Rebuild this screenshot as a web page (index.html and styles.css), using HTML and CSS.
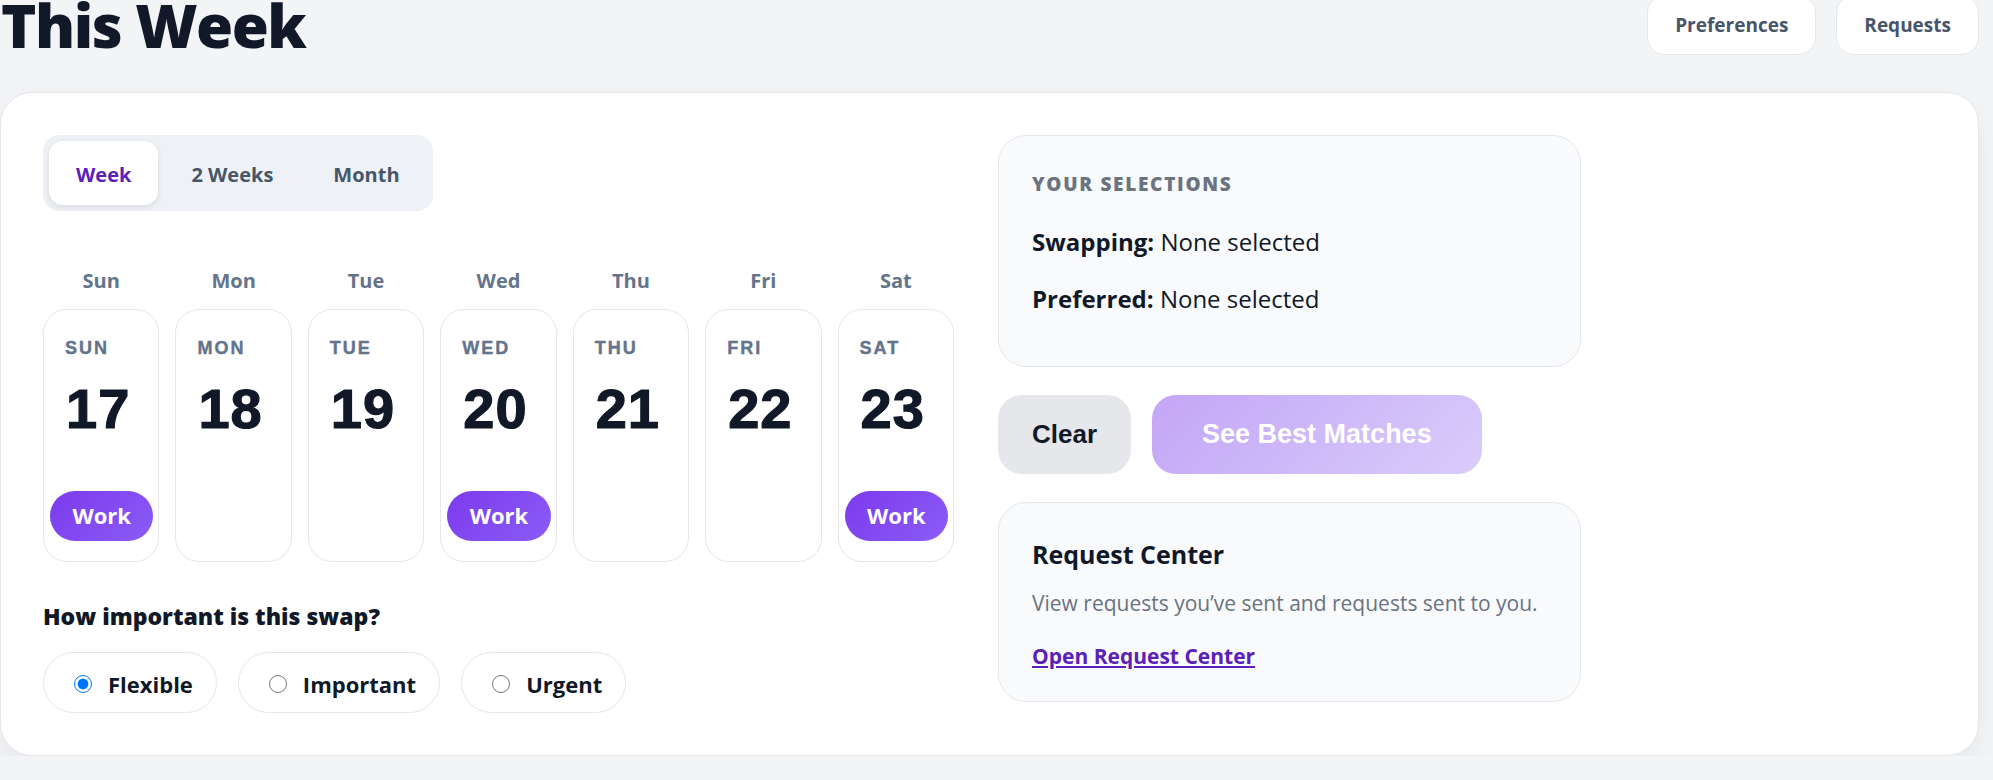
FILE: index.html
```html
<!DOCTYPE html>
<html lang="en">
<head>
<meta charset="utf-8">
<title>This Week</title>
<link rel="stylesheet" href="styles.css">
</head>
<body>
<div class="page">
  <header class="top">
    <h1 class="title">This Week</h1>
    <div class="top-actions">
      <button class="ghost-btn">Preferences</button>
      <button class="ghost-btn">Requests</button>
    </div>
  </header>
  <main class="panel">
    <section class="left">
      <div class="seg">
        <button class="seg-tab active">Week</button>
        <button class="seg-tab">2 Weeks</button>
        <button class="seg-tab">Month</button>
      </div>
      <div class="weekdays">
        <span>Sun</span><span>Mon</span><span>Tue</span><span>Wed</span><span>Thu</span><span>Fri</span><span>Sat</span>
      </div>
      <div class="days">
        <div class="day"><span class="day-label">SUN</span><span class="day-num">17</span><span class="work">Work</span></div>
        <div class="day"><span class="day-label">MON</span><span class="day-num">18</span></div>
        <div class="day"><span class="day-label">TUE</span><span class="day-num">19</span></div>
        <div class="day"><span class="day-label">WED</span><span class="day-num">20</span><span class="work">Work</span></div>
        <div class="day"><span class="day-label">THU</span><span class="day-num">21</span></div>
        <div class="day"><span class="day-label">FRI</span><span class="day-num">22</span></div>
        <div class="day"><span class="day-label">SAT</span><span class="day-num">23</span><span class="work">Work</span></div>
      </div>
      <h2 class="question">How important is this swap?</h2>
      <div class="prio">
        <label class="prio-opt"><input type="radio" name="prio" checked><span>Flexible</span></label>
        <label class="prio-opt"><input type="radio" name="prio"><span>Important</span></label>
        <label class="prio-opt"><input type="radio" name="prio"><span>Urgent</span></label>
      </div>
    </section>
    <aside class="right">
      <div class="box sel">
        <div class="box-eyebrow">YOUR SELECTIONS</div>
        <p class="sel-line first"><strong>Swapping:</strong> None selected</p>
        <p class="sel-line"><strong>Preferred:</strong> None selected</p>
      </div>
      <div class="actions">
        <button class="btn-clear">Clear</button>
        <button class="btn-match">See Best Matches</button>
      </div>
      <div class="box req">
        <h3 class="req-title">Request Center</h3>
        <p class="req-desc">View requests you’ve sent and requests sent to you.</p>
        <a class="req-link" href="#">Open Request Center</a>
      </div>
    </aside>
  </main>
</div>
</body>
</html>
```
FILE: styles.css
```css
* { box-sizing: border-box; }
html, body { margin: 0; padding: 0; }
body {
  background: #f3f4f6;
  font-family: "Open Sans", "Noto Sans", sans-serif;
  color: #111827;
  overflow: hidden;
}
button { font-family: inherit; border: none; cursor: pointer; }
.page {
  width: 1979px;
  margin-top: -5px;
}
.top {
  display: flex;
  align-items: center;
  justify-content: space-between;
  height: 60px;
}
.title {
  margin: 0 0 0 1px;
  font-size: 60px;
  line-height: 60px;
  font-weight: 800;
  color: #111827;
  letter-spacing: -1.5px;
}
.top-actions { display: flex; gap: 20px; }
.ghost-btn {
  height: 60px;
  padding: 0 27px;
  background: #fff;
  border: 1px solid #e5e7eb;
  border-radius: 18px;
  font-size: 19px;
  font-weight: 700;
  color: #475569;
}
.panel {
  margin-top: 37px;
  background: #fff;
  border: 1px solid #e5e7eb;
  border-radius: 32px;
  padding: 42px;
  display: grid;
  grid-template-columns: 911px 583px;
  column-gap: 44px;
  align-items: start;
  box-shadow: 0 12px 30px rgba(15, 23, 42, 0.05);
}
.seg {
  display: inline-flex;
  gap: 6px;
  padding: 6px;
  background: #eef2f6;
  border-radius: 16px;
}
.seg-tab {
  height: 64px;
  padding: 0 27px;
  border-radius: 14px;
  background: transparent;
  font-size: 20px;
  font-weight: 700;
  color: #475569;
  padding-top: 2px;
}
.seg-tab.active {
  background: #fff;
  color: #5b21b6;
  box-shadow: 0 2px 6px rgba(15, 23, 42, 0.1);
}
.weekdays {
  margin-top: 56px;
  display: grid;
  grid-template-columns: repeat(7, 1fr);
  gap: 16px;
  text-align: center;
  font-size: 20px;
  line-height: 28px;
  font-weight: 700;
  color: #64748b;
}
.days {
  margin-top: 14px;
  display: grid;
  grid-template-columns: repeat(7, 1fr);
  gap: 16px;
}
.day {
  height: 253px;
  border: 1px solid #e5e7eb;
  border-radius: 24px;
  padding: 28px 5px 20px 6px;
  display: flex;
  flex-direction: column;
  font-family: "Liberation Sans", Arial, sans-serif;
}
.day-label {
  padding-left: 15px;
  font-size: 18px;
  line-height: 20px;
  font-weight: 700;
  letter-spacing: 2px;
  color: #64748b;
  -webkit-text-stroke: 0.4px #64748b;
}
.day-num {
  margin-top: 21px;
  padding-left: 16px;
  font-size: 56px;
  line-height: 60px;
  font-weight: 700;
  color: #111827;
  -webkit-text-stroke: 1.2px #111827;
  letter-spacing: 1px;
}
.work {
  margin-top: auto;
  height: 50px;
  border-radius: 25px;
  background: linear-gradient(135deg, #7c3aed, #8b5cf6);
  color: #fff;
  display: flex;
  align-items: center;
  justify-content: center;
  font-family: "Open Sans", sans-serif;
  font-size: 22px;
  font-weight: 700;
  padding-bottom: 2px;
}
.question {
  margin: 40px 0 0;
  font-size: 23px;
  line-height: 28px;
  font-weight: 800;
  color: #111827;
}
.prio {
  margin-top: 22px;
  display: flex;
  gap: 21px;
}
.prio-opt {
  height: 61px;
  display: flex;
  align-items: center;
  gap: 13px;
  padding: 0 23px 0 25px;
  border: 1px solid #e5e7eb;
  border-radius: 31px;
  font-size: 22px;
  font-weight: 700;
  color: #111827;
}
.prio-opt span { padding-top: 2px; }
.prio-opt input {
  width: 18px;
  height: 18px;
  margin: 2px 3px 0 5px;
}
.right {
  display: flex;
  flex-direction: column;
  gap: 28px;
}
.box {
  background: #f8fafc;
  border: 1px solid #e5e7eb;
  border-radius: 28px;
}
.sel {
  height: 232px;
  padding: 36px 33px 30px;
}
.box-eyebrow {
  font-size: 19px;
  line-height: 24px;
  font-weight: 800;
  letter-spacing: 1.7px;
  color: #6b7280;
}
.sel-line {
  margin: 25px 0 0;
  font-size: 24px;
  line-height: 32px;
  color: #111827;
}
.sel-line.first { margin-top: 30px; }
.sel-line strong { font-weight: 700; }
.actions { display: flex; gap: 21px; }
.btn-clear, .btn-match {
  height: 79px;
  border-radius: 24px;
  font-family: "Liberation Sans", Arial, sans-serif;
  font-size: 26px;
  font-weight: 700;
}
.btn-clear {
  padding: 0 34px;
  background: #e5e7eb;
  color: #111827;
}
.btn-match {
  padding: 0 50px;
  font-size: 27px;
  background: linear-gradient(135deg, #c3a5f6, #d9cdfb);
  color: #fff;
}
.req {
  height: 200px;
  padding: 35px 33px;
}
.req-title {
  margin: 0;
  font-size: 25px;
  line-height: 32px;
  font-weight: 700;
  color: #111827;
}
.req-desc {
  margin: 19px 0 0;
  font-size: 21px;
  line-height: 28px;
  color: #6b7280;
}
.req-link {
  display: inline-block;
  margin-top: 25px;
  font-size: 21px;
  line-height: 28px;
  font-weight: 700;
  color: #5b21b6;
  text-decoration: underline;
}
```
